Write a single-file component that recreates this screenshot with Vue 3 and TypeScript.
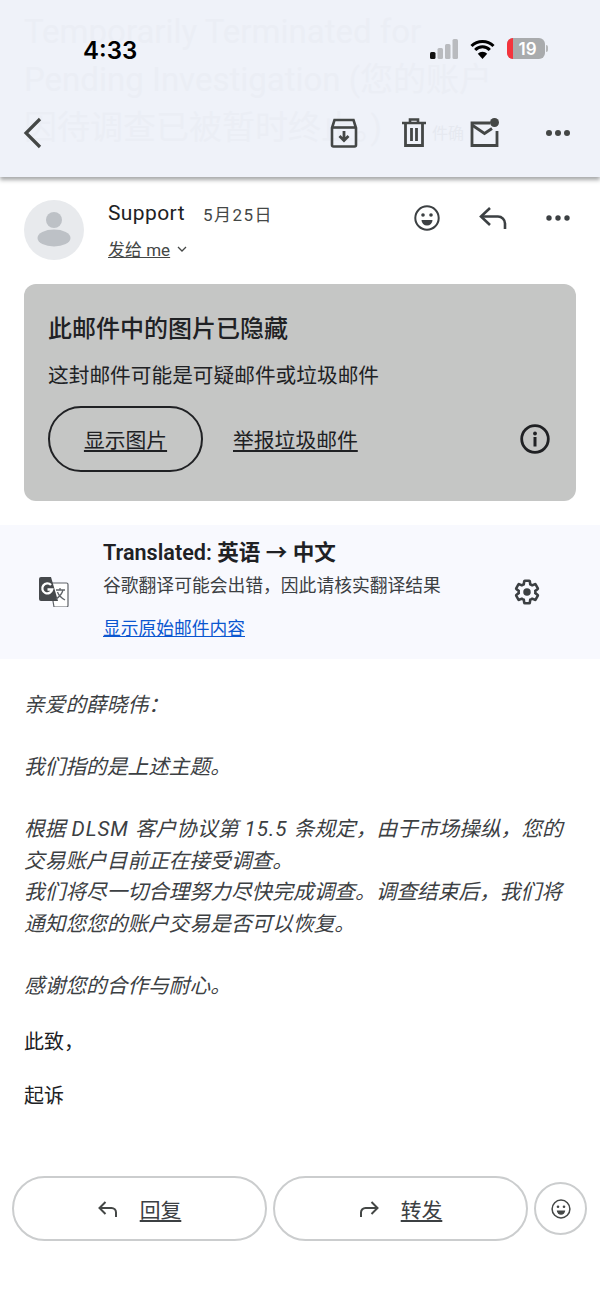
<template>
  <div class="screen">
    <header class="top">
      <div class="ghost-title">
        Temporarily Terminated for<br />
        Pending Investigation (您的账户<br />
        因待调查已被暂时终止。)
      </div>
      <div class="ghost-tag">件确</div>

      <div class="status">
        <span class="time">4:33</span>
        <div class="status-icons">
          <svg width="28" height="20" viewBox="0 0 28 20">
            <rect x="0" y="13" width="5.500" height="7" rx="1.500" fill="#111" />
            <rect x="7.500" y="9" width="5.500" height="11" rx="1.500" fill="#b9bbbf" />
            <rect x="15" y="5" width="5.500" height="15" rx="1.500" fill="#b9bbbf" />
            <rect x="22.500" y="0" width="5.500" height="20" rx="1.500" fill="#b9bbbf" />
          </svg>
          <svg class="wifi" width="25" height="20" viewBox="0 0 25 20">
            <path d="M1.500 7a15.500 15.500 0 0 1 22 0M5.200 11a10 10 0 0 1 14.600 0" fill="none" stroke="#000" stroke-width="3" />
            <path d="M12.500 20 7.800 14.800a6.500 6.500 0 0 1 9.400 0z" fill="#000" />
          </svg>
          <div class="battery">
            <span class="battery-low"></span>
            <span class="battery-num">19</span>
          </div>
          <span class="battery-tip"></span>
        </div>
      </div>

      <div class="toolbar">
        <svg class="back" width="20" height="32" viewBox="0 0 20 32">
          <path d="M17 2 3 16l14 14" fill="none" stroke="#444746" stroke-width="3.200" />
        </svg>
        <div class="toolbar-actions">
          <svg width="28" height="30" viewBox="0 0 28 30">
            <path d="M2 10 4.500 2h19L26 10v17a1.500 1.500 0 0 1-1.500 1.500h-21A1.500 1.500 0 0 1 2 27z" fill="none" stroke="#444746" stroke-width="2.600" />
            <path d="M2 9.500h24" stroke="#444746" stroke-width="2.600" />
            <path d="M14 13v9M9.500 18l4.500 4.500 4.500-4.500" fill="none" stroke="#444746" stroke-width="2.800" />
          </svg>
          <svg width="24" height="30" viewBox="0 0 24 30">
            <path d="M0 5h24M8 4V1.500h8V4" fill="none" stroke="#444746" stroke-width="2.600" />
            <path d="M3.500 6v21.500h17V6" fill="none" stroke="#444746" stroke-width="2.800" />
            <path d="M9.500 10v13M14.500 10v13" stroke="#444746" stroke-width="2.800" />
          </svg>
          <svg width="32" height="30" viewBox="0 0 32 30">
            <path d="M20 5H2v22.500h25V13" fill="none" stroke="#444746" stroke-width="2.800" />
            <path d="M2 7l12.500 8.500L22 10.500" fill="none" stroke="#444746" stroke-width="2.800" />
            <circle cx="24.500" cy="4.500" r="4.500" fill="#444746" />
          </svg>
          <svg width="24" height="6" viewBox="0 0 24 6">
            <circle cx="3" cy="3" r="3" fill="#444746" />
            <circle cx="12" cy="3" r="3" fill="#444746" />
            <circle cx="21" cy="3" r="3" fill="#444746" />
          </svg>
        </div>
      </div>
    </header>

    <section class="sender">
      <div class="avatar">
        <svg width="60" height="60" viewBox="0 0 60 60">
          <circle cx="30" cy="20" r="8" fill="#bdc1c6" />
          <ellipse cx="30" cy="38" rx="16.500" ry="8.500" fill="#bdc1c6" />
        </svg>
      </div>
      <div class="sender-info">
        <div class="sender-line">
          <span class="sender-name">Support</span>
          <span class="sender-date">5月25日</span>
        </div>
        <div class="sender-to">
          <span class="to-link">发给 me</span>
          <svg width="10" height="6" viewBox="0 0 10 6">
            <path d="M1 1l4 4 4-4" fill="none" stroke="#444746" stroke-width="1.300" />
          </svg>
        </div>
      </div>
      <div class="sender-actions">
        <svg width="26" height="26" viewBox="0 0 26 26">
          <circle cx="13" cy="13" r="11.700" fill="none" stroke="#3c4043" stroke-width="2" />
          <circle cx="9" cy="10" r="1.800" fill="#3c4043" />
          <circle cx="17" cy="10" r="1.800" fill="#3c4043" />
          <path d="M7.500 15h11a5.500 5.500 0 0 1-11 0z" fill="#3c4043" />
        </svg>
        <svg width="28" height="24" viewBox="0 0 28 24">
          <path d="M11 2 2 10.500l9 8.500" fill="none" stroke="#3c4043" stroke-width="2.600" />
          <path d="M2 10.500h17a7 7 0 0 1 7 7V23" fill="none" stroke="#3c4043" stroke-width="2.600" />
        </svg>
        <svg width="24" height="6" viewBox="0 0 24 6">
          <circle cx="3" cy="3" r="2.700" fill="#3c4043" />
          <circle cx="12" cy="3" r="2.700" fill="#3c4043" />
          <circle cx="21" cy="3" r="2.700" fill="#3c4043" />
        </svg>
      </div>
    </section>

    <section class="hidden-card">
      <h2 class="hidden-title">此邮件中的图片已隐藏</h2>
      <p class="hidden-desc">这封邮件可能是可疑邮件或垃圾邮件</p>
      <div class="hidden-actions">
        <a class="show-btn">显示图片</a>
        <a class="report">举报垃圾邮件</a>
        <svg class="info" width="30" height="30" viewBox="0 0 30 30">
          <circle cx="15" cy="15" r="13.300" fill="none" stroke="#202124" stroke-width="2.800" />
          <circle cx="15" cy="9.500" r="1.900" fill="#202124" />
          <rect x="13.500" y="13" width="3" height="9.500" fill="#202124" />
        </svg>
      </div>
    </section>

    <section class="translate">
      <svg class="translate-icon" width="30" height="30" viewBox="0 0 30 30">
        <path d="M11 6h16.500A1.500 1.500 0 0 1 29 7.500v21a1.500 1.500 0 0 1-1.500 1.500H15z" fill="#fff" stroke="#5f6368" stroke-width="1.200" />
        <path d="M2 0h10l7 24H2a2 2 0 0 1-2-2V2a2 2 0 0 1 2-2z" fill="#46494c" />
        <path d="M12 8A5 5 0 1 0 13.200 12.500H8.500" fill="none" stroke="#fff" stroke-width="2.300" />
        <path d="M17 13h9M21 11v2M24 13c-1 4-4 7-7 9M18.500 15c1 3 4 6 7.500 8" fill="none" stroke="#5f6368" stroke-width="1.300" />
      </svg>
      <div class="translate-text">
        <div class="translate-title">Translated: 英语 → 中文</div>
        <div class="translate-note">谷歌翻译可能会出错，因此请核实翻译结果</div>
        <a class="translate-link">显示原始邮件内容</a>
      </div>
      <svg class="gear" width="28" height="28" viewBox="0 0 24 24">
        <path d="M19.140 12.940a7.500 7.500 0 0 0 0-1.880l2.030-1.580a.5.5 0 0 0 .12-.61l-1.920-3.320a.5.5 0 0 0-.59-.22l-2.390.96a7 7 0 0 0-1.620-.94l-.36-2.540a.48.48 0 0 0-.48-.41h-3.840a.48.48 0 0 0-.47.41l-.36 2.540a7.300 7.300 0 0 0-1.630.94l-2.390-.96a.48.48 0 0 0-.59.22L2.740 8.870a.48.48 0 0 0 .12.61l2.030 1.580a7.400 7.400 0 0 0 0 1.880l-2.030 1.580a.5.5 0 0 0-.12.61l1.920 3.320c.12.22.37.29.59.22l2.390-.96c.5.38 1.030.7 1.620.94l.36 2.540c.05.24.24.41.48.41h3.840c.24 0 .44-.17.47-.41l.36-2.540a7 7 0 0 0 1.620-.94l2.390.96c.22.08.47 0 .59-.22l1.920-3.320a.48.48 0 0 0-.12-.61z" fill="none" stroke="#3c4043" stroke-width="2.200" />
        <circle cx="12" cy="12" r="3.200" fill="#3c4043" />
      </svg>
    </section>

    <article class="body">
      <p>亲爱的薛晓伟：</p>
      <p>我们指的是上述主题。</p>
      <p>
        根据<span class="latin"> DLSM </span>客户协议第<span class="latin"> 15.5 </span>条规定，由于市场操纵，您的<br />
        交易账户目前正在接受调查。<br />
        我们将尽一切合理努力尽快完成调查。调查结束后，我们将<br />
        通知您您的账户交易是否可以恢复。
      </p>
      <p class="thanks">感谢您的合作与耐心。</p>
      <p class="plain">此致，</p>
      <p class="plain">起诉</p>
    </article>

    <footer class="actions">
      <a class="pill">
        <svg width="20" height="16" viewBox="0 0 20 16">
          <path d="M7.500 1 1.500 7l6 6" fill="none" stroke="#444746" stroke-width="2" />
          <path d="M1.500 7h12a4.500 4.500 0 0 1 4.500 4.500V16" fill="none" stroke="#444746" stroke-width="2" />
        </svg>
        <span>回复</span>
      </a>
      <a class="pill">
        <svg width="20" height="16" viewBox="0 0 20 16">
          <path d="M12.500 1l6 6-6 6" fill="none" stroke="#444746" stroke-width="2" />
          <path d="M18.500 7h-12A4.500 4.500 0 0 0 2 11.500V16" fill="none" stroke="#444746" stroke-width="2" />
        </svg>
        <span>转发</span>
      </a>
      <div class="emoji">
        <svg width="20" height="20" viewBox="0 0 20 20">
          <circle cx="10" cy="10" r="8.900" fill="none" stroke="#444746" stroke-width="1.500" />
          <circle cx="7" cy="7.700" r="1.300" fill="#444746" />
          <circle cx="13" cy="7.700" r="1.300" fill="#444746" />
          <path d="M5.800 11.500h8.400a4.200 4.200 0 0 1-8.400 0z" fill="#444746" />
        </svg>
      </div>
    </footer>
  </div>
</template>

<script setup lang="ts">
</script>

<style>
html,
body {
  background: #fff;
}
</style>

<style scoped>
.screen {
  display: flex;
  flex-direction: column;
  width: 600px;
  height: 1304px;
  overflow: hidden;
  background: #fff;
  color: #202124;
  font-family: Roboto, "Noto Sans CJK SC", sans-serif;
}

.top {
  position: relative;
  flex: none;
  height: 177px;
  background: #eff2f9;
  box-shadow: 0 3px 4px rgba(60, 64, 67, 0.45);
  overflow: hidden;
}

.ghost-title {
  position: absolute;
  left: 24px;
  top: 8px;
  font-size: 33px;
  line-height: 48px;
  white-space: nowrap;
  color: #ebeef5;
}

.ghost-tag {
  position: absolute;
  left: 432px;
  top: 120px;
  font-size: 16px;
  color: #e6e9f0;
}

.status {
  position: relative;
  display: flex;
  justify-content: space-between;
  align-items: center;
  height: 40px;
  padding: 30px 52px 0 83px;
}

.time {
  font-family: Inter, sans-serif;
  font-size: 24px;
  font-weight: 600;
  color: #000;
}

.status-icons {
  display: flex;
  align-items: center;
  margin-top: -3px;
}

.wifi {
  margin-left: 12px;
}

.battery {
  position: relative;
  display: flex;
  justify-content: center;
  align-items: center;
  width: 38px;
  height: 21px;
  margin-left: 12px;
  border-radius: 6px;
  background: #a9abad;
  overflow: hidden;
}

.battery-low {
  position: absolute;
  left: 0;
  top: 0;
  bottom: 0;
  width: 6px;
  background: #f4343d;
}

.battery-num {
  position: relative;
  margin-left: 3px;
  font-family: Inter, sans-serif;
  font-size: 17px;
  font-weight: 600;
  color: #fff;
}

.battery-tip {
  width: 2px;
  height: 7px;
  margin-left: 1px;
  border-radius: 0 2px 2px 0;
  background: #b5b7b9;
}

.toolbar {
  position: relative;
  display: flex;
  justify-content: space-between;
  align-items: center;
  height: 40px;
  margin-top: 43px;
  padding: 0 30px 0 23px;
}

.toolbar-actions {
  display: flex;
  align-items: center;
  gap: 44px;
}

.sender {
  display: flex;
  flex: none;
  align-items: flex-start;
  height: 107px;
  padding: 23px 30px 0 24px;
  box-sizing: border-box;
}

.avatar {
  width: 60px;
  height: 60px;
  border-radius: 50%;
  background: #e8eaed;
}

.sender-info {
  flex: 1;
  margin-left: 24px;
}

.sender-line {
  display: flex;
  align-items: center;
  gap: 18px;
  height: 26px;
}

.sender-name {
  font-size: 21px;
  letter-spacing: 0.4px;
  color: #202124;
}

.sender-date {
  font-size: 17px;
  letter-spacing: 1.500px;
  color: #444746;
}

.sender-to {
  display: flex;
  align-items: center;
  gap: 7px;
  margin-top: 10px;
  font-size: 17px;
  color: #444746;
}

.to-link {
  text-decoration: underline;
}

.sender-actions {
  display: flex;
  align-items: center;
  gap: 39px;
  margin-top: 5px;
}

.hidden-card {
  flex: none;
  height: 217px;
  margin: 0 24px;
  padding: 28px 24px 0;
  box-sizing: border-box;
  border-radius: 12px;
  background: #c5c6c5;
}

.hidden-title {
  margin: 0;
  font-size: 24px;
  font-weight: 500;
  line-height: 34px;
  color: #202124;
}

.hidden-desc {
  margin: 15px 0 0;
  font-size: 20.700px;
  line-height: 30px;
  color: #202124;
}

.hidden-actions {
  display: flex;
  align-items: center;
  margin-top: 15px;
}

.show-btn {
  display: flex;
  justify-content: center;
  align-items: center;
  width: 155px;
  height: 66px;
  box-sizing: border-box;
  border: 2px solid #202124;
  border-radius: 33px;
  font-size: 20.800px;
  text-decoration: underline;
  color: #202124;
}

.report {
  margin-left: 30px;
  font-size: 20.800px;
  text-decoration: underline;
  color: #202124;
}

.info {
  margin-left: auto;
  margin-right: 2px;
}

.translate {
  display: flex;
  flex: none;
  align-items: center;
  height: 134px;
  margin-top: 24px;
  padding: 0 59px 0 39px;
  box-sizing: border-box;
  background: #f8f9fe;
}

.translate-icon {
  flex: none;
}

.translate-text {
  flex: 1;
  margin-left: 34px;
  padding-bottom: 4px;
}

.translate-title {
  font-size: 21.600px;
  font-weight: 600;
  line-height: 28px;
  color: #202124;
}

.translate-note {
  margin-top: 6.500px;
  font-size: 17.800px;
  line-height: 26px;
  color: #3c4043;
}

.translate-link {
  display: block;
  margin-top: 16.500px;
  font-size: 17.750px;
  line-height: 26px;
  text-decoration: underline;
  color: #0b57d0;
}

.body {
  flex: 1;
  padding: 31px 24px 0;
  font-size: 20.700px;
  font-style: italic;
  line-height: 31.700px;
  color: #3c4043;
}

.body p {
  margin: 0 0 30.300px;
}

.latin {
  letter-spacing: 1px;
}

.body .thanks {
  margin-bottom: 24.500px;
}

.body .plain {
  margin-bottom: 22px;
  font-size: 20px;
  font-style: normal;
  color: #202124;
}

.actions {
  display: flex;
  flex: none;
  align-items: center;
  gap: 6px;
  padding: 0 12px 63px;
}

.pill {
  display: flex;
  justify-content: center;
  align-items: center;
  gap: 22px;
  width: 255px;
  height: 65px;
  box-sizing: border-box;
  border: 2px solid #cbcdce;
  border-radius: 33px;
  font-size: 20.800px;
  text-decoration: underline;
  color: #3c4043;
}

.emoji {
  display: flex;
  justify-content: center;
  align-items: center;
  width: 53px;
  height: 53px;
  box-sizing: border-box;
  border: 2px solid #cbcdce;
  border-radius: 50%;
}
</style>
